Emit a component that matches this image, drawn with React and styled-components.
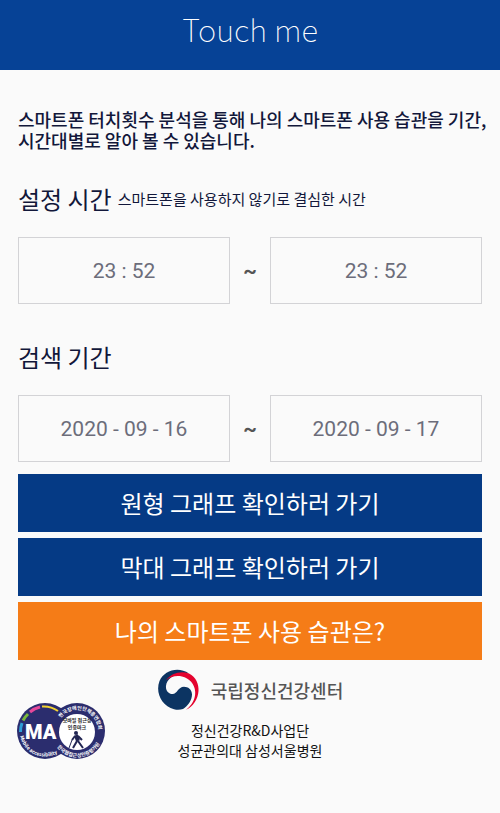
import React, { useState } from "react";
import styled, { createGlobalStyle } from "styled-components";

const GlobalStyle = createGlobalStyle`
  * {
    box-sizing: border-box;
  }

  body {
    margin: 0;
    background: #fafafa;
    font-family: "Noto Sans CJK KR", "Noto Sans", sans-serif;
    color: #12173a;
  }
`;

const Header = styled.header`
  display: flex;
  justify-content: center;
  height: 70px;
  padding-top: 7px;
  background: #064296;
`;

const Title = styled.h1`
  margin: 0;
  color: #fff;
  font-size: 31px;
  font-weight: 100;
  line-height: 44px;
`;

const Main = styled.main`
  padding: 39px 18px 0;
`;

const Description = styled.p`
  margin: 0;
  font-size: 18px;
  font-weight: 500;
  line-height: 21px;
  white-space: nowrap;
`;

const Section = styled.section`
  margin-top: 30px;

  & + & {
    margin-top: 35px;
  }
`;

const SectionHead = styled.div`
  display: flex;
  align-items: center;
  gap: 6px;
  height: 36px;
  margin-bottom: 20px;
`;

const SectionTitle = styled.h2`
  margin: 0;
  font-size: 24px;
  font-weight: 400;
  line-height: 36px;
`;

const Hint = styled.span`
  font-size: 15px;
  line-height: 20px;
`;

const Range = styled.div`
  display: grid;
  grid-template-columns: 1fr 40px 1fr;
  align-items: center;
`;

const Field = styled.input`
  width: 100%;
  height: 67px;
  padding: 0;
  border: 1px solid #d3d3d6;
  border-radius: 0;
  background: transparent;
  color: #6c6d7a;
  font-family: Roboto, sans-serif;
  font-size: 21px;
  text-align: center;
  outline: none;
`;

const Tilde = styled.span`
  color: #555;
  font-family: Roboto, sans-serif;
  font-size: 21px;
  font-weight: 700;
  text-align: center;
`;

const Actions = styled.div`
  display: flex;
  flex-direction: column;
  gap: 6px;
  margin-top: 12px;
`;

const ActionButton = styled.button`
  height: 58px;
  padding: 0;
  border: 0;
  background: ${(props) => (props.$accent ? "#f57c17" : "#053a85")};
  color: #fff;
  font-family: inherit;
  font-size: 24px;
  line-height: 36px;
  cursor: pointer;
`;

const Footer = styled.footer`
  display: grid;
  grid-template-columns: 1fr auto 1fr;
  align-items: end;
  padding: 9px 16px 0;
`;

const Badge = styled.svg`
  display: block;
  width: 90px;
  height: 58px;
`;

const Organization = styled.div`
  display: flex;
  flex-direction: column;
  align-items: center;
  gap: 9px;
`;

const CenterLogo = styled.div`
  display: flex;
  align-items: center;
  gap: 12px;
  color: #555;
  font-size: 18px;
  font-weight: 500;
  line-height: 20px;
`;

const Partners = styled.p`
  margin: 0;
  color: #111;
  font-size: 14px;
  line-height: 20px;
  text-align: center;
`;

const TaegeukMark = () => (
  <svg width="42" height="42" viewBox="0 0 42 42" aria-hidden="true">
    <path
      d="M32 4.4C21-3 7 1.5 2.500 12C-2 24 5 37 17 40.200C20 41 23.500 40.800 26 40C31 37 35 31 35 25.500C35 20.500 31 17.800 27 17.800C21 17.800 20.500 25 15.500 25C11.500 25 8.500 21.500 9 17C9.500 10 17 5.500 24 4.500C27 4.100 30 4 32 4.400Z"
      fill="#0c3462"
    />
    <path
      d="M9 11.500C14 4 24 1.500 32 4.400C39 8 42 15 41.500 22C41 30 36 38 29 40.800C35 36 38.500 30 38.200 23C38 15 32 9 25 7.500C19 6.300 13 7.800 9 11.500Z"
      fill="#e4032e"
    />
  </svg>
);

const AccessibilityBadge = () => (
  <Badge viewBox="0 0 90 58" role="img" aria-label="모바일 접근성 인증마크">
    <defs>
      <path id="badge-left" d="M4 34A25.500 25.500 0 0 0 48 46" />
      <path id="badge-top" d="M45 16A20.500 20.500 0 0 1 78 41" />
      <path id="badge-bottom" d="M41 45A25.500 25.500 0 0 0 86 36" />
    </defs>
    <circle cx="29" cy="29" r="28" fill="#2b2d6e" />
    <circle cx="61" cy="29" r="28" fill="#2b2d6e" />
    <circle cx="61" cy="30" r="18" fill="#fff" />
    <g fill="none" strokeWidth="3">
      <path d="M4.500 30A24.500 24.500 0 0 1 6 21" stroke="#2f9fd8" />
      <path d="M7 18.500A24.500 24.500 0 0 1 12 12" stroke="#7ab83c" />
      <path d="M14 10A24.500 24.500 0 0 1 24 5" stroke="#e5489a" />
      <path d="M26 4.500A24.500 24.500 0 0 1 42 9" stroke="#f2d231" strokeWidth="2" />
    </g>
    <text x="9" y="37" fill="#fff" fontFamily="Roboto, sans-serif" fontSize="20" fontWeight="900">MA</text>
    <g fill="#fff" fontSize="5" fontWeight="700">
      <text><textPath href="#badge-left">Mobile accessibility</textPath></text>
      <text><textPath href="#badge-top">한국장애인단체총연합회</textPath></text>
      <text><textPath href="#badge-bottom">한국웹접근성인증평가원</textPath></text>
    </g>
    <g fill="#222" fontSize="5" fontWeight="700" textAnchor="middle">
      <text x="61" y="20">모바일 접근성</text>
      <text x="61" y="27">인증마크</text>
    </g>
    <circle cx="60" cy="31" r="2" fill="#222653" />
    <path d="M60 33L62 39" stroke="#222653" strokeWidth="4" />
    <path d="M62 39L67 46M61 39L57 46M59 34L56 38M62 34L66 38" stroke="#222653" strokeWidth="2" fill="none" />
    <path d="M56 38L53 46" stroke="#222653" strokeWidth="1" />
  </Badge>
);

const RangeFields = ({ label, start, end }) => {
  const [from, setFrom] = useState(start);
  const [to, setTo] = useState(end);

  return (
    <Range>
      <Field aria-label={`${label} 시작`} value={from} onChange={(e) => setFrom(e.target.value)} />
      <Tilde>~</Tilde>
      <Field aria-label={`${label} 종료`} value={to} onChange={(e) => setTo(e.target.value)} />
    </Range>
  );
};

const App = () => (
  <>
    <GlobalStyle />
    <Header>
      <Title>Touch me</Title>
    </Header>
    <Main>
      <Description>
        스마트폰 터치횟수 분석을 통해 나의 스마트폰 사용 습관을 기간,
        <br />
        시간대별로 알아 볼 수 있습니다.
      </Description>
      <Section>
        <SectionHead>
          <SectionTitle>설정 시간</SectionTitle>
          <Hint>스마트폰을 사용하지 않기로 결심한 시간</Hint>
        </SectionHead>
        <RangeFields label="설정 시간" start="23 : 52" end="23 : 52" />
      </Section>
      <Section>
        <SectionHead>
          <SectionTitle>검색 기간</SectionTitle>
        </SectionHead>
        <RangeFields label="검색 기간" start="2020 - 09 - 16" end="2020 - 09 - 17" />
      </Section>
      <Actions>
        <ActionButton>원형 그래프 확인하러 가기</ActionButton>
        <ActionButton>막대 그래프 확인하러 가기</ActionButton>
        <ActionButton $accent>나의 스마트폰 사용 습관은?</ActionButton>
      </Actions>
    </Main>
    <Footer>
      <AccessibilityBadge />
      <Organization>
        <CenterLogo>
          <TaegeukMark />
          국립정신건강센터
        </CenterLogo>
        <Partners>
          정신건강R&amp;D사업단
          <br />
          성균관의대 삼성서울병원
        </Partners>
      </Organization>
    </Footer>
  </>
);

export default App;
